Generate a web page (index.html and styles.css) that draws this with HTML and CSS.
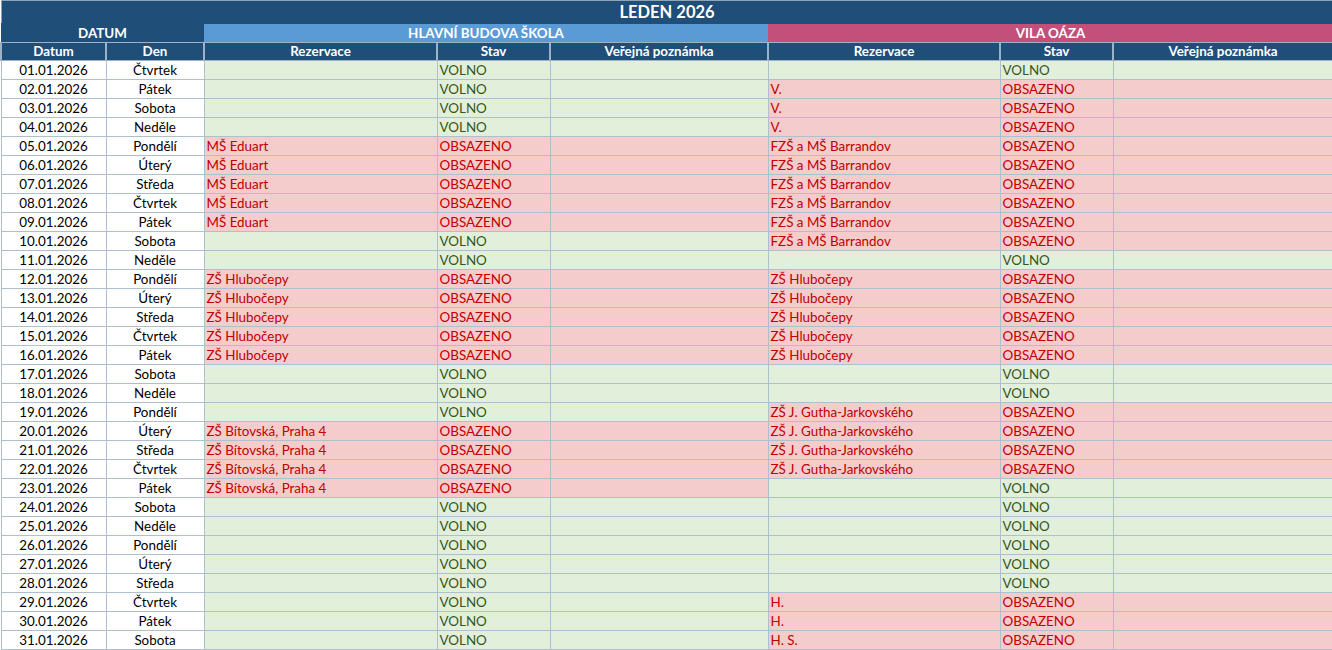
FILE: index.html
```html
<!DOCTYPE html>
<html lang="cs">
<head>
<meta charset="utf-8">
<title>Leden 2026</title>
<link rel="stylesheet" href="styles.css">
</head>
<body>
<table class="sheet">
<colgroup>
<col class="c-date"><col class="c-day"><col class="c-rez1"><col class="c-stav1"><col class="c-note1"><col class="c-rez2"><col class="c-stav2"><col class="c-note2">
</colgroup>
<thead>
<tr class="title-row"><th colspan="8" class="title">LEDEN 2026</th></tr>
<tr class="group-row">
<th colspan="2" class="g-datum">DATUM</th>
<th colspan="3" class="g-main">HLAVNÍ BUDOVA ŠKOLA</th>
<th colspan="3" class="g-vila">VILA OÁZA</th>
</tr>
<tr class="head-row">
<th>Datum</th><th>Den</th><th>Rezervace</th><th>Stav</th><th>Veřejná poznámka</th><th>Rezervace</th><th>Stav</th><th>Veřejná poznámka</th>
</tr>
</thead>
<tbody>
<tr><td class="d">01.01.2026</td><td class="d">Čtvrtek</td><td class="f"></td><td class="f st">VOLNO</td><td class="f"></td><td class="f"></td><td class="f st">VOLNO</td><td class="f"></td></tr>
<tr><td class="d">02.01.2026</td><td class="d">Pátek</td><td class="f"></td><td class="f st">VOLNO</td><td class="f"></td><td class="b">V.</td><td class="b st">OBSAZENO</td><td class="b"></td></tr>
<tr><td class="d">03.01.2026</td><td class="d">Sobota</td><td class="f"></td><td class="f st">VOLNO</td><td class="f"></td><td class="b">V.</td><td class="b st">OBSAZENO</td><td class="b"></td></tr>
<tr><td class="d">04.01.2026</td><td class="d">Neděle</td><td class="f"></td><td class="f st">VOLNO</td><td class="f"></td><td class="b">V.</td><td class="b st">OBSAZENO</td><td class="b"></td></tr>
<tr><td class="d">05.01.2026</td><td class="d">Pondělí</td><td class="b">MŠ Eduart</td><td class="b st">OBSAZENO</td><td class="b"></td><td class="b">FZŠ a MŠ Barrandov</td><td class="b st">OBSAZENO</td><td class="b"></td></tr>
<tr><td class="d">06.01.2026</td><td class="d">Úterý</td><td class="b">MŠ Eduart</td><td class="b st">OBSAZENO</td><td class="b"></td><td class="b">FZŠ a MŠ Barrandov</td><td class="b st">OBSAZENO</td><td class="b"></td></tr>
<tr><td class="d">07.01.2026</td><td class="d">Středa</td><td class="b">MŠ Eduart</td><td class="b st">OBSAZENO</td><td class="b"></td><td class="b">FZŠ a MŠ Barrandov</td><td class="b st">OBSAZENO</td><td class="b"></td></tr>
<tr><td class="d">08.01.2026</td><td class="d">Čtvrtek</td><td class="b">MŠ Eduart</td><td class="b st">OBSAZENO</td><td class="b"></td><td class="b">FZŠ a MŠ Barrandov</td><td class="b st">OBSAZENO</td><td class="b"></td></tr>
<tr><td class="d">09.01.2026</td><td class="d">Pátek</td><td class="b">MŠ Eduart</td><td class="b st">OBSAZENO</td><td class="b"></td><td class="b">FZŠ a MŠ Barrandov</td><td class="b st">OBSAZENO</td><td class="b"></td></tr>
<tr><td class="d">10.01.2026</td><td class="d">Sobota</td><td class="f"></td><td class="f st">VOLNO</td><td class="f"></td><td class="b">FZŠ a MŠ Barrandov</td><td class="b st">OBSAZENO</td><td class="b"></td></tr>
<tr><td class="d">11.01.2026</td><td class="d">Neděle</td><td class="f"></td><td class="f st">VOLNO</td><td class="f"></td><td class="f"></td><td class="f st">VOLNO</td><td class="f"></td></tr>
<tr><td class="d">12.01.2026</td><td class="d">Pondělí</td><td class="b">ZŠ Hlubočepy</td><td class="b st">OBSAZENO</td><td class="b"></td><td class="b">ZŠ Hlubočepy</td><td class="b st">OBSAZENO</td><td class="b"></td></tr>
<tr><td class="d">13.01.2026</td><td class="d">Úterý</td><td class="b">ZŠ Hlubočepy</td><td class="b st">OBSAZENO</td><td class="b"></td><td class="b">ZŠ Hlubočepy</td><td class="b st">OBSAZENO</td><td class="b"></td></tr>
<tr><td class="d">14.01.2026</td><td class="d">Středa</td><td class="b">ZŠ Hlubočepy</td><td class="b st">OBSAZENO</td><td class="b"></td><td class="b">ZŠ Hlubočepy</td><td class="b st">OBSAZENO</td><td class="b"></td></tr>
<tr><td class="d">15.01.2026</td><td class="d">Čtvrtek</td><td class="b">ZŠ Hlubočepy</td><td class="b st">OBSAZENO</td><td class="b"></td><td class="b">ZŠ Hlubočepy</td><td class="b st">OBSAZENO</td><td class="b"></td></tr>
<tr><td class="d">16.01.2026</td><td class="d">Pátek</td><td class="b">ZŠ Hlubočepy</td><td class="b st">OBSAZENO</td><td class="b"></td><td class="b">ZŠ Hlubočepy</td><td class="b st">OBSAZENO</td><td class="b"></td></tr>
<tr><td class="d">17.01.2026</td><td class="d">Sobota</td><td class="f"></td><td class="f st">VOLNO</td><td class="f"></td><td class="f"></td><td class="f st">VOLNO</td><td class="f"></td></tr>
<tr><td class="d">18.01.2026</td><td class="d">Neděle</td><td class="f"></td><td class="f st">VOLNO</td><td class="f"></td><td class="f"></td><td class="f st">VOLNO</td><td class="f"></td></tr>
<tr><td class="d">19.01.2026</td><td class="d">Pondělí</td><td class="f"></td><td class="f st">VOLNO</td><td class="f"></td><td class="b">ZŠ J. Gutha-Jarkovského</td><td class="b st">OBSAZENO</td><td class="b"></td></tr>
<tr><td class="d">20.01.2026</td><td class="d">Úterý</td><td class="b">ZŠ Bítovská, Praha 4</td><td class="b st">OBSAZENO</td><td class="b"></td><td class="b">ZŠ J. Gutha-Jarkovského</td><td class="b st">OBSAZENO</td><td class="b"></td></tr>
<tr><td class="d">21.01.2026</td><td class="d">Středa</td><td class="b">ZŠ Bítovská, Praha 4</td><td class="b st">OBSAZENO</td><td class="b"></td><td class="b">ZŠ J. Gutha-Jarkovského</td><td class="b st">OBSAZENO</td><td class="b"></td></tr>
<tr><td class="d">22.01.2026</td><td class="d">Čtvrtek</td><td class="b">ZŠ Bítovská, Praha 4</td><td class="b st">OBSAZENO</td><td class="b"></td><td class="b">ZŠ J. Gutha-Jarkovského</td><td class="b st">OBSAZENO</td><td class="b"></td></tr>
<tr><td class="d">23.01.2026</td><td class="d">Pátek</td><td class="b">ZŠ Bítovská, Praha 4</td><td class="b st">OBSAZENO</td><td class="b"></td><td class="f"></td><td class="f st">VOLNO</td><td class="f"></td></tr>
<tr><td class="d">24.01.2026</td><td class="d">Sobota</td><td class="f"></td><td class="f st">VOLNO</td><td class="f"></td><td class="f"></td><td class="f st">VOLNO</td><td class="f"></td></tr>
<tr><td class="d">25.01.2026</td><td class="d">Neděle</td><td class="f"></td><td class="f st">VOLNO</td><td class="f"></td><td class="f"></td><td class="f st">VOLNO</td><td class="f"></td></tr>
<tr><td class="d">26.01.2026</td><td class="d">Pondělí</td><td class="f"></td><td class="f st">VOLNO</td><td class="f"></td><td class="f"></td><td class="f st">VOLNO</td><td class="f"></td></tr>
<tr><td class="d">27.01.2026</td><td class="d">Úterý</td><td class="f"></td><td class="f st">VOLNO</td><td class="f"></td><td class="f"></td><td class="f st">VOLNO</td><td class="f"></td></tr>
<tr><td class="d">28.01.2026</td><td class="d">Středa</td><td class="f"></td><td class="f st">VOLNO</td><td class="f"></td><td class="f"></td><td class="f st">VOLNO</td><td class="f"></td></tr>
<tr><td class="d">29.01.2026</td><td class="d">Čtvrtek</td><td class="f"></td><td class="f st">VOLNO</td><td class="f"></td><td class="b">H.</td><td class="b st">OBSAZENO</td><td class="b"></td></tr>
<tr><td class="d">30.01.2026</td><td class="d">Pátek</td><td class="f"></td><td class="f st">VOLNO</td><td class="f"></td><td class="b">H.</td><td class="b st">OBSAZENO</td><td class="b"></td></tr>
<tr><td class="d">31.01.2026</td><td class="d">Sobota</td><td class="f"></td><td class="f st">VOLNO</td><td class="f"></td><td class="b">H. S.</td><td class="b st">OBSAZENO</td><td class="b"></td></tr>
</tbody>
</table>
</body>
</html>
```
FILE: styles.css
```css
html, body {
  margin: 0;
  padding: 0;
  background: #ffffff;
}
body {
  font-family: Lato, "Liberation Sans", sans-serif;
  font-size: 13.4px;
  color: #000;
}
.sheet {
  border-collapse: collapse;
  table-layout: fixed;
  width: 1332px;
}
.c-date { width: 105px; }
.c-day { width: 98px; }
.c-rez1 { width: 233px; }
.c-stav1 { width: 113px; }
.c-note1 { width: 218px; }
.c-rez2 { width: 232px; }
.c-stav2 { width: 113px; }
.c-note2 { width: 220px; }

.sheet th {
  font-weight: 700;
  color: #ffffff;
  padding: 0;
  white-space: nowrap;
  overflow: hidden;
}
.title-row th {
  height: 22px;
  background: #1f4e78;
  font-size: 16.5px;
  line-height: 22px;
  border: 1px solid #1f4e78;
  border-top-color: #8fa5ba;
  border-left-color: #8fa5ba;
}
.group-row th {
  height: 18px;
  line-height: 18px;
  font-size: 13.4px;
  border: 0;
}
.g-datum { background: #1f4e78; }
.g-main { background: #5b9bd5; }
.g-vila { background: #c2507a; }
.head-row th {
  height: 17px;
  line-height: 17px;
  font-size: 13.4px;
  background: #1f4e78;
  border: 1px solid #9eb2c6;
  border-width: 1px 2px;
}
.sheet td {
  height: 18px;
  line-height: 18px;
  padding: 0 2px 0 2px;
  border: 1px solid #aebfcf;
  white-space: nowrap;
  overflow: hidden;
}
td.d {
  text-align: center;
  background: #ffffff;
}
td.f {
  background: #e2efda;
  color: #375623;
}
td.b {
  background: #f4cccc;
  color: #c00000;
}
```
